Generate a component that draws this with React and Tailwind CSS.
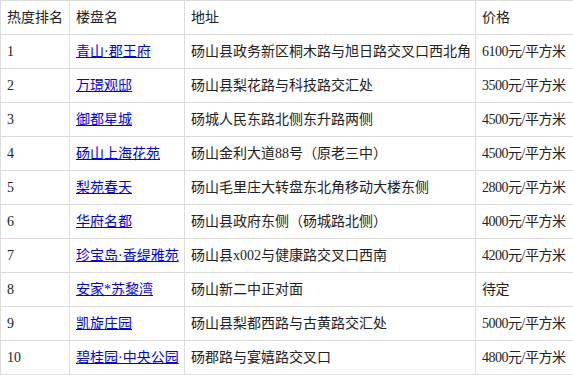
import React from 'react';

const rows = [
  ['1', '青山·郡王府', '砀山县政务新区桐木路与旭日路交叉口西北角', '6100元/平方米'],
  ['2', '万璟观邸', '砀山县梨花路与科技路交汇处', '3500元/平方米'],
  ['3', '御都星城', '砀城人民东路北侧东升路两侧', '4500元/平方米'],
  ['4', '砀山上海花苑', '砀山金利大道88号（原老三中）', '4500元/平方米'],
  ['5', '梨苑春天', '砀山毛里庄大转盘东北角移动大楼东侧', '2800元/平方米'],
  ['6', '华府名都', '砀山县政府东侧（砀城路北侧）', '4000元/平方米'],
  ['7', '珍宝岛·香缇雅苑', '砀山县x002与健康路交叉口西南', '4200元/平方米'],
  ['8', '安家*苏黎湾', '砀山新二中正对面', '待定'],
  ['9', '凯旋庄园', '砀山县梨都西路与古黄路交汇处', '5000元/平方米'],
  ['10', '碧桂园·中央公园', '砀郡路与宴嬉路交叉口', '4800元/平方米'],
];

const cell = 'border border-[#dddddd] px-1.5 py-1.5 leading-[21px] whitespace-nowrap text-left font-normal';

export default function App() {
  return (
    <div className="bg-white" style={{ fontFamily: '"Liberation Serif", "Noto Sans CJK SC", serif' }}>
      <table className="table-fixed border-collapse w-[573px] text-[14px] text-[#222]">
        <colgroup>
          <col className="w-[69px]" />
          <col className="w-[115px]" />
          <col className="w-[291px]" />
          <col className="w-[98px]" />
        </colgroup>
        <thead>
          <tr>
            <th className={cell}>热度排名</th>
            <th className={cell}>楼盘名</th>
            <th className={cell}>地址</th>
            <th className={cell}>价格</th>
          </tr>
        </thead>
        <tbody>
          {rows.map(([rank, name, addr, price]) => (
            <tr key={rank}>
              <td className={cell}>{rank}</td>
              <td className={cell}>
                <a href="#" className="text-[#0000ee] underline">{name}</a>
              </td>
              <td className={cell}>{addr}</td>
              <td className={`${cell} tracking-[-0.5px]`}>{price}</td>
            </tr>
          ))}
        </tbody>
      </table>
    </div>
  );
}
